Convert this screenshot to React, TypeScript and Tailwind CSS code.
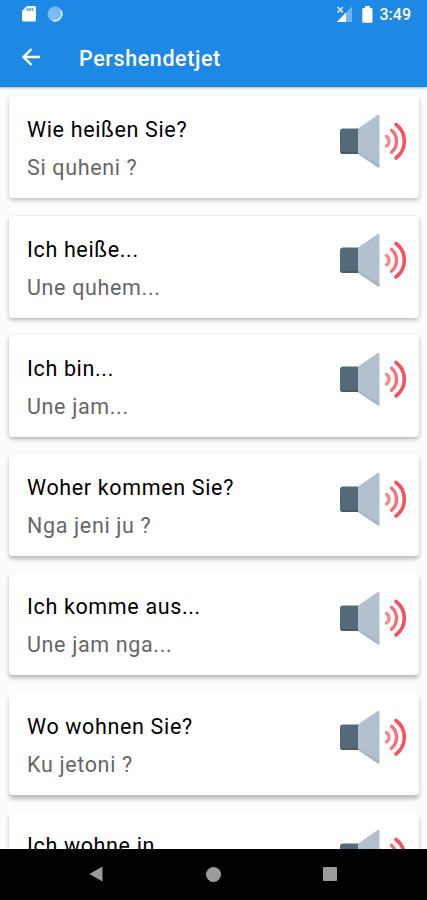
const phrases = [
    { german: 'Wie heißen Sie?', albanian: 'Si quheni ?', shadow: 'shadow-[0_2px_4px_rgba(0,0,0,0.26)]' },
    { german: 'Ich heiße...', albanian: 'Une quhem...', shadow: 'shadow-[0_2px_4px_rgba(0,0,0,0.28)]' },
    { german: 'Ich bin...', albanian: 'Une jam...', shadow: 'shadow-[0_2px_4px_rgba(0,0,0,0.3)]' },
    { german: 'Woher kommen Sie?', albanian: 'Nga jeni ju ?', shadow: 'shadow-[0_3px_4px_rgba(0,0,0,0.27)]' },
    { german: 'Ich komme aus...', albanian: 'Une jam nga...', shadow: 'shadow-[0_3px_4px_rgba(0,0,0,0.27)]' },
    { german: 'Wo wohnen Sie?', albanian: 'Ku jetoni ?', shadow: 'shadow-[0_4px_4px_rgba(0,0,0,0.25)]' },
    { german: 'Ich wohne in', albanian: '', shadow: 'shadow-[0_4px_4px_rgba(0,0,0,0.25)]' },
];

function SpeakerIcon() {
    return (
        <svg width="70" height="56" viewBox="0 0 70 56" fill="none">
            <path d="M21 14.500H5a3 3 0 0 0-3 3v19.500a3 3 0 0 0 3 3h16z" fill="#546a79" />
            <path d="M21 38H2.200A3 3 0 0 0 5 40h16z" fill="#475b68" />
            <path d="M20 14.500 39.300 1.300Q41.500 0 41.500 2.500V52q0 2.500-2.200 1L20 40z" fill="#b3c1ce" />
            <path d="M20 38 41.500 50.500V52q0 2.500-2.200 1L20 40z" fill="#a8b7c5" />
            <g stroke="#f7707a" strokeWidth="3.400" strokeLinecap="round">
                <path d="M48.500 22.500a5.600 5.600 0 0 1 0 9.400" stroke="#f58a90" />
                <path d="M53.500 16.300a14.500 14.500 0 0 1 0 22" />
                <path d="M58 10.500a21 21 0 0 1 0 33.500" stroke="#f9505e" strokeWidth="3.600" />
            </g>
        </svg>
    );
}

function StatusBar() {
    return (
        <div className="flex h-7 items-center pl-[22px] pr-[16px]">
            <svg width="14" height="16" viewBox="0 0 14 16">
                <path d="M5 0h7.500A1.500 1.500 0 0 1 14 1.500v12.500a1.500 1.500 0 0 1-1.500 1.500h-11A1.500 1.500 0 0 1 0 14V5z" fill="#fff" />
                <path d="M5.500 2v3M8 2v3M10.500 2v3" stroke="#5ba6ec" strokeWidth="1.800" />
            </svg>
            <svg className="ml-[11px]" width="16" height="16" viewBox="0 0 16 16">
                <circle cx="8" cy="8" r="7.500" fill="#7db9f0" />
                <path d="M13.500 4.200A6.700 6.700 0 0 1 5.500 14.200" fill="none" stroke="#d3e7fb" strokeWidth="1.800" />
            </svg>
            <svg className="ml-auto" width="17" height="17" viewBox="0 0 17 17">
                <path d="M16 .500v15.500H1z" fill="#73b3ee" />
                <path d="M10 6.500V16H1z" fill="#fff" />
                <path d="m1.500 1 5.500 5.500M7 1 1.500 6.500" stroke="#1e88e5" strokeWidth="3" />
                <path d="m1.500 1 5.500 5.500M7 1 1.500 6.500" stroke="#d6e9fb" strokeWidth="1.700" />
            </svg>
            <svg className="ml-[9px]" width="11" height="17" viewBox="0 0 11 17">
                <path d="M3 0h5v2h1.500A1.200 1.200 0 0 1 10.500 3.200v12.300a1.200 1.200 0 0 1-1.200 1.200H1.500a1.200 1.200 0 0 1-1.200-1.200V3.200A1.200 1.200 0 0 1 1.500 2H3z" fill="#fff" />
            </svg>
            <span className="ml-[7px] pt-[2px] text-[16px] font-medium">3:49</span>
        </div>
    );
}

function NavBar() {
    return (
        <div className="flex h-[51px] shrink-0 items-center justify-center gap-[102px] bg-black pr-[2px] pb-px">
            <svg width="16" height="16" viewBox="0 0 16 16">
                <path d="M14.500 .500v15L1.500 8z" fill="#9b9b9b" />
            </svg>
            <div className="size-[15px] rounded-full bg-[#9b9b9b]" />
            <div className="size-[14px] rounded-[1px] bg-[#9b9b9b]" />
        </div>
    );
}

export default function App() {
    return (
        <div className="flex h-[900px] w-[427px] flex-col overflow-hidden bg-[#fcfcfc] font-['Roboto',sans-serif]">
            <header className="z-10 h-[87px] shrink-0 bg-[#1e88e5] text-white shadow-[0_1px_2px_rgba(0,0,0,0.3)]">
                <StatusBar />
                <div className="flex h-[58px] items-center pl-[22px]">
                    <svg width="19" height="18" viewBox="0 0 19 18" fill="none" stroke="#fff" strokeWidth="2.400">
                        <path d="M18 9H2M9.500 1 1.500 9l8 8" />
                    </svg>
                    <h1 className="ml-[38px] pt-[4px] text-[21.500px] font-medium tracking-[0.600px]">Pershendetjet</h1>
                </div>
            </header>

            <main className="flex min-h-0 flex-1 flex-col gap-[17.250px] overflow-hidden pl-[9px] pr-[8px] pt-[9.300px]">
                {phrases.map((phrase) => (
                    <div
                        key={phrase.german}
                        className={`flex h-[102px] shrink-0 justify-between rounded-[4px] bg-white pl-[18px] pr-[11px] ${phrase.shadow}`}
                    >
                        <div className="pt-[18px] text-[21.500px] leading-[32px] tracking-[0.650px]">
                            <p className="text-black">{phrase.german}</p>
                            {phrase.albanian && <p className="mt-[6px] text-[#666]">{phrase.albanian}</p>}
                        </div>
                        <div className="pt-[17.500px]">
                            <SpeakerIcon />
                        </div>
                    </div>
                ))}
            </main>

            <NavBar />
        </div>
    );
}
